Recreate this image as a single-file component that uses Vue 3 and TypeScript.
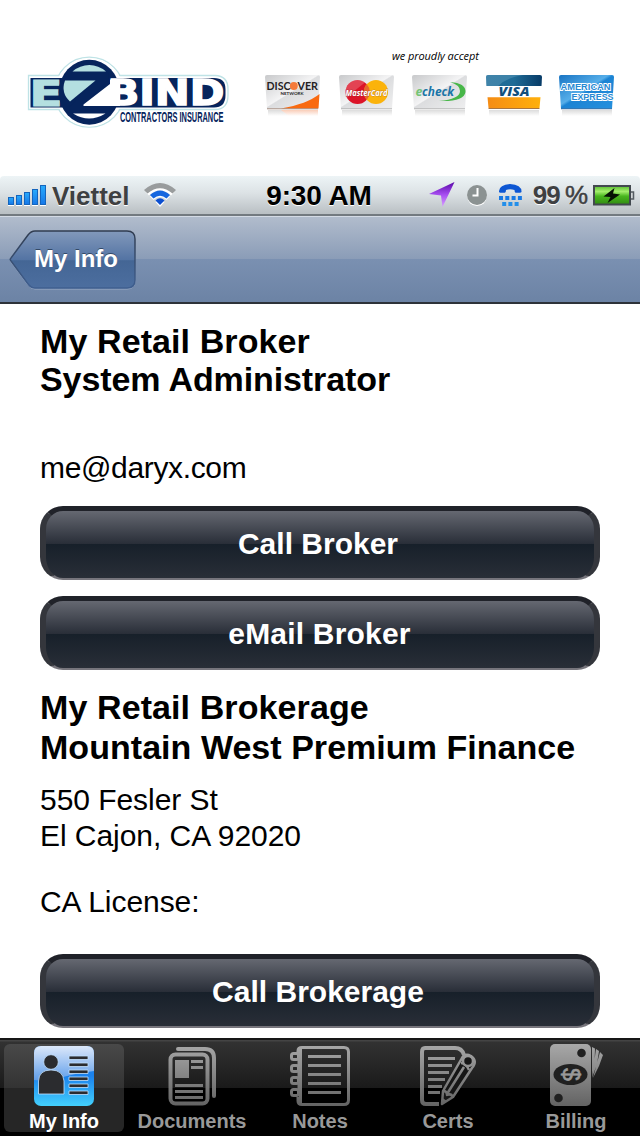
<script setup lang="ts">
import { ref } from "vue";

interface Tab {
  id: string;
  label: string;
}

const tabs: Tab[] = [
  { id: "info", label: "My Info" },
  { id: "documents", label: "Documents" },
  { id: "notes", label: "Notes" },
  { id: "certs", label: "Certs" },
  { id: "billing", label: "Billing" },
];

const active = ref("info");

const signalBars = [8, 10, 13, 16, 20];
const ttyTop = [0, 6.3, 12.6, 18.9];
const ttyBottom = [3.2, 9.4, 15.6];
</script>

<template>
  <div class="screen">
    <header class="brand">
      <svg class="logo" width="208" height="80" viewBox="0 0 208 80">
        <g fill="#fff" stroke="#bfe3e6" stroke-width="1.3">
          <circle cx="65.300" cy="43.200" r="35" />
          <path d="M4.500 26.500H191Q204 27 204 40V46Q204 60.500 191 60.500H4.500Z" />
        </g>
        <circle cx="65.300" cy="43.200" r="34.300" fill="#fff" />
        <path d="M6.500 29H190Q201.500 29 201.500 40V46Q201.500 58.500 190 58.500H6.500Z" fill="#06245c" />
        <text class="logo-word" x="5.500" y="56.500" font-size="35" textLength="33" lengthAdjust="spacingAndGlyphs" fill="#b4dfe0" stroke="#b4dfe0" stroke-width="1.200">E</text>
        <ellipse cx="65.300" cy="43.200" rx="30.500" ry="32.500" fill="#06245c" />
        <text class="logo-word" x="43" y="64" font-size="55" textLength="45" lengthAdjust="spacingAndGlyphs" fill="#06245c">Z</text>
        <path d="M48.500 22.500Q56 16 65.300 16Q74.500 16 82 22.500Z" fill="#b4dfe0" />
        <path d="M49 64.500H81.500Q65 74.500 49 64.500Z" fill="#fff" />
        <path d="M41 31.500H71.500L46 52.500Q36.500 44 41 31.500Z" fill="#b4dfe0" />
        <path d="M86 30.500H96V57H59.500V55.500L86 35Z" fill="#fff" />
        <text class="logo-word" x="83.500" y="56" font-size="35" textLength="117" lengthAdjust="spacingAndGlyphs" fill="#fff" stroke="#fff" stroke-width="1.400">BIND</text>
        <text class="logo-tag" x="0" y="0" font-size="15" textLength="103.500" lengthAdjust="spacingAndGlyphs" transform="translate(96 72.800)">CONTRACTORS INSURANCE</text>
      </svg>

      <div class="payments">
        <span class="accept">we proudly accept</span>
        <div class="cards">
          <svg class="card" viewBox="0 0 56 44">
            <defs>
              <linearGradient id="silver" x1="0" y1="0" x2="1" y2="1">
                <stop offset="0" stop-color="#c8c9cb" />
                <stop offset=".48" stop-color="#f4f4f5" />
                <stop offset=".5" stop-color="#dcdddf" />
                <stop offset="1" stop-color="#efeff0" />
              </linearGradient>
              <linearGradient id="reflect" x1="0" y1="0" x2="0" y2="1">
                <stop offset="0" stop-color="#dcdcdc" />
                <stop offset="1" stop-color="#fff" />
              </linearGradient>
              <linearGradient id="reflectOrange" x1="0" y1="0" x2="0" y2="1">
                <stop offset="0" stop-color="#f9cdb8" />
                <stop offset="1" stop-color="#fff" />
              </linearGradient>
            </defs>
            <path d="M3 35H53V41H3Z" fill="url(#reflect)" />
            <path d="M16 35H53V41H24Z" fill="url(#reflectOrange)" />
            <path d="M0 2Q0 0 2 0H53Q55 0 55 2L53 34H2Z" fill="url(#silver)" />
            <path d="M16 33.500Q42 29 54.500 19L53.500 33.500Z" fill="#f96a10" />
            <path d="M2 33.800H53" stroke="#9b7c6c" stroke-width=".8" />
            <circle cx="28.800" cy="11" r="4" fill="#f47a3a" />
            <text class="lato" x="1.500" y="15.300" font-size="12" textLength="24" lengthAdjust="spacingAndGlyphs" fill="#25211f">DISC</text>
            <text class="lato" x="32.500" y="15.300" font-size="12" textLength="20.500" lengthAdjust="spacingAndGlyphs" fill="#25211f">VER</text>
            <text class="lato" x="15.500" y="20.300" font-size="4.500" textLength="23" fill="#222">NETWORK</text>
          </svg>
          <svg class="card" viewBox="0 0 56 44">
            <path d="M3 35H53V41H3Z" fill="url(#reflect)" />
            <path d="M0 2Q0 0 2 0H53Q55 0 55 2L53 34H2Z" fill="url(#silver)" />
            <path d="M2 33.800H53" stroke="#aaa" stroke-width=".8" />
            <circle cx="18.500" cy="17" r="12" fill="#dc1428" />
            <circle cx="37" cy="17" r="12" fill="#fbb30b" />
            <path d="M27.700 9A12 12 0 0 1 27.700 25A12 12 0 0 1 27.700 9Z" fill="#e8672b" />
            <path d="M7 13.500A12 12 0 0 1 26 7.500L14 17L8 23Q6 18 7 13.500Z" fill="#fff" opacity=".2" />
            <text class="opensans" x="6.500" y="20.500" font-size="9" textLength="42" lengthAdjust="spacingAndGlyphs" fill="#fff" stroke="#7b3630" stroke-width=".4" paint-order="stroke">MasterCard</text>
          </svg>
          <svg class="card" viewBox="0 0 56 44">
            <path d="M3 35H53V41H3Z" fill="url(#reflect)" />
            <path d="M0 2Q0 0 2 0H53Q55 0 55 2L53 34H2Z" fill="url(#silver)" />
            <path d="M2 33.800H53" stroke="#aaa" stroke-width=".8" />
            <path d="M38 7Q54 8 53.500 17Q52 27 27 26Q48 24 48 16Q48 10 38 7Z" fill="#48b749" />
            <text class="opensans" x="3.500" y="20.500" font-size="12.500" fill="#74c476">e</text>
            <text class="opensans" x="10" y="20.500" font-size="12.500" textLength="32" lengthAdjust="spacingAndGlyphs" fill="#1b75a7">check</text>
          </svg>
          <svg class="card" viewBox="0 0 56 44">
            <defs>
              <linearGradient id="visaBlue" x1="0" x2="1">
                <stop offset="0" stop-color="#246d98" />
                <stop offset=".5" stop-color="#1f6b96" />
                <stop offset="1" stop-color="#073b67" />
              </linearGradient>
              <linearGradient id="visaGold" x1="0" x2="1">
                <stop offset="0" stop-color="#f58c14" />
                <stop offset="1" stop-color="#ffb00c" />
              </linearGradient>
            </defs>
            <path d="M3 35H53V41H3Z" fill="url(#reflect)" />
            <path d="M0 2Q0 0 2 0H54Q56 0 56 2L55.500 11H.500Z" fill="url(#visaBlue)" />
            <path d="M12 11Q20 3 37 0H2Q0 0 0 2L.500 11Z" fill="#6aa4c3" opacity=".4" />
            <path d="M1 11H54.500L54 22H1.500Z" fill="#fff" />
            <path d="M1.500 22.300H54.500L53.500 33H2.500Z" fill="url(#visaGold)" />
            <path d="M2.500 33.500H53.500" stroke="#a97540" />
            <text class="opensans visa" x="12.500" y="21.300" font-size="12.500" textLength="31" lengthAdjust="spacingAndGlyphs" fill="#124f7d">VISA</text>
          </svg>
          <svg class="card" viewBox="0 0 56 44">
            <defs>
              <linearGradient id="amex" x1="0" y1="0" x2="1" y2="1">
                <stop offset="0" stop-color="#1874c3" />
                <stop offset=".45" stop-color="#56aee9" />
                <stop offset=".5" stop-color="#1b83d3" />
                <stop offset="1" stop-color="#2591df" />
              </linearGradient>
            </defs>
            <path d="M3 35H53V41H3Z" fill="url(#reflect)" />
            <path d="M0 2Q0 0 2 0H53Q55 0 55 2L53 34H2Z" fill="url(#amex)" />
            <path d="M2 33.800H53" stroke="#436c9a" stroke-width=".8" />
            <text class="amex" x="1.500" y="15.300" font-size="9.500" textLength="50" lengthAdjust="spacingAndGlyphs">AMERICAN</text>
            <text class="amex" x="12.500" y="25.300" font-size="9" textLength="42" lengthAdjust="spacingAndGlyphs">EXPRESS</text>
          </svg>
        </div>
      </div>
    </header>

    <div class="status">
      <div class="status-left">
        <div class="signal">
          <i v-for="h in signalBars" :key="h" :style="{ height: h + 'px' }"></i>
        </div>
        <span class="carrier">Viettel</span>
        <svg class="wifi" width="32" height="26" viewBox="0 0 32 26" fill="none">
          <path d="M1.500 9Q16-4.500 30.500 9L27 12.500Q16 2.500 5 12.500Z" fill="#fff" transform="translate(0 1)" />
          <path d="M0 8Q16-6 32 8L28.500 11.500Q16 1 3.500 11.500Z" fill="#999c9d" />
          <path d="M6 14.500Q16 5.500 26 14.500L22.500 18Q16 12 9.500 18Z" fill="#fff" />
          <path d="M6 13Q16 4 26 13L22.500 16.500Q16 11 9.500 16.500Z" fill="#1767df" />
          <path d="M11.500 20Q16 15.500 20.500 20L16 25Z" fill="#fff" />
          <path d="M11.500 18.500Q16 14 20.500 18.500L16 23Z" fill="#0c4fd0" />
        </svg>
      </div>
      <span class="clock">9:30 AM</span>
      <div class="status-right">
        <svg width="26" height="26" viewBox="0 0 26 26">
          <defs>
            <linearGradient id="arrow" x1="0" y1="0" x2="0" y2="1">
              <stop offset="0" stop-color="#5a08a8" />
              <stop offset=".5" stop-color="#a64df0" />
              <stop offset="1" stop-color="#d9a2ff" />
            </linearGradient>
          </defs>
          <path d="M25.500 0L0 12L12 13.500L13.500 25Z" fill="url(#arrow)" />
        </svg>
        <svg class="alarm" width="20" height="22" viewBox="0 0 20 22">
          <circle cx="10" cy="12.200" r="9.800" fill="#fff" />
          <circle cx="10" cy="11" r="10" fill="#8b9292" />
          <path d="M10.500 4V11.500H5.500" fill="none" stroke="#fff" stroke-width="2" />
        </svg>
        <svg class="tty" width="23" height="24" viewBox="0 0 23 24">
          <path d="M0 8Q-.500 1 11 0Q23 1 22.500 8Q22 9 20 8.700H16.500Q15.500 8 15.500 6Q11 4.500 7 6Q7 8 6 8.700H2Q.500 9 0 8Z" fill="#0d57d3" />
          <rect v-for="x in ttyTop" :key="'t' + x" :x="x" y="12" width="4" height="4" fill="#1879e4" />
          <rect v-for="x in ttyBottom" :key="'b' + x" :x="x" y="18" width="4" height="4" fill="#238fea" />
        </svg>
        <span class="percent">99<em>%</em></span>
        <svg class="battery" width="42" height="22" viewBox="0 0 42 22">
          <defs>
            <linearGradient id="charge" x1="0" y1="0" x2="0" y2="1">
              <stop offset="0" stop-color="#58bc2f" />
              <stop offset=".3" stop-color="#a3ee6c" />
              <stop offset=".55" stop-color="#48b61e" />
              <stop offset="1" stop-color="#318b12" />
            </linearGradient>
          </defs>
          <rect x="1" y="1" width="36" height="18.500" fill="url(#charge)" stroke="#42494f" stroke-width="2" />
          <path d="M38 7H40.500V14H38" fill="#d2d6d8" stroke="#555c62" stroke-width="1.500" />
          <path d="M21.500 3L10.500 11.500L17.500 12L14.500 18L27 9.500L20 8.500Z" fill="#061204" />
        </svg>
      </div>
    </div>

    <nav class="navbar">
      <button class="back">
        <svg class="back-shape" width="128" height="61" viewBox="0 0 128 61">
          <defs>
            <linearGradient id="back" x1="0" y1="0" x2="0" y2="1">
              <stop offset="0" stop-color="#8299bb" />
              <stop offset=".51" stop-color="#5373a3" />
              <stop offset=".52" stop-color="#446695" />
              <stop offset="1" stop-color="#4c6e9f" />
            </linearGradient>
            <linearGradient id="backEdge" x1="0" y1="0" x2="0" y2="1">
              <stop offset="0" stop-color="#303c50" />
              <stop offset="1" stop-color="#3f5f90" />
            </linearGradient>
          </defs>
          <path d="M26 2H118Q126 2 126 10V51Q126 59 118 59H26Q22 59 19 55L2 32Q.500 30.500 2 29L19 6Q22 2 26 2Z" fill="none" stroke="#b9c6da" stroke-opacity=".6" />
          <path d="M26 1H118Q126 1 126 9V50Q126 58 118 58H26Q22 58 19 54L2 31Q.500 29.500 2 28L19 5Q22 1 26 1Z" fill="url(#back)" stroke="url(#backEdge)" stroke-width="1.500" />
        </svg>
        <span class="back-label">My Info</span>
      </button>
    </nav>

    <main class="content">
      <h2>My Retail Broker<br /><span class="role">System Administrator</span></h2>
      <p class="email">me@daryx.com</p>
      <button class="action">Call Broker</button>
      <button class="action email-action">eMail Broker</button>
      <h2 class="brokerage">My Retail Brokerage<br /><span class="company">Mountain West Premium Finance</span></h2>
      <p class="address">550 Fesler St<br />El Cajon, CA 92020</p>
      <p class="license">CA License:</p>
      <button class="action">Call Brokerage</button>
    </main>

    <footer class="tabbar">
      <button
        v-for="t in tabs"
        :key="t.id"
        class="tab"
        :class="{ active: t.id === active }"
        @click="active = t.id"
      >
        <svg v-if="t.id === 'info'" class="tab-icon" viewBox="0 0 60 62">
          <defs>
            <linearGradient id="glossTop" x1="0" y1="0" x2="0" y2="1">
              <stop offset="0" stop-color="#dce8fa" />
              <stop offset="1" stop-color="#609eea" />
            </linearGradient>
            <linearGradient id="glossBottom" x1="0" y1="0" x2="0" y2="1">
              <stop offset="0" stop-color="#1b82ed" />
              <stop offset=".5" stop-color="#1b82ed" />
              <stop offset="1" stop-color="#43d0fc" />
            </linearGradient>
          </defs>
          <rect y="2" width="60" height="60" rx="7" fill="url(#glossBottom)" />
          <path d="M0 36V9Q0 2 7 2H53Q60 2 60 9V27Q43 29 29 33Q14 37 0 36Z" fill="url(#glossTop)" />
          <g fill="#2b2c2f" stroke="#c4e2ff" stroke-width=".8">
            <circle cx="17" cy="18" r="7.300" />
            <path d="M4.500 50V37Q5 26 17 26Q29 26 30 37V50Z" />
            <path d="M35 12H54V15.500H35ZM35 19H54V22.500H35ZM35 26H54V29.500H35ZM35 33H54V36.500H35ZM35 40H54V43.500H35ZM35 47H54V50.500H35Z" />
          </g>
        </svg>
        <svg v-else-if="t.id === 'documents'" class="tab-icon" viewBox="0 0 60 62">
          <defs>
            <linearGradient id="grey" gradientUnits="userSpaceOnUse" x1="0" y1="0" x2="0" y2="62">
              <stop offset="0" stop-color="#a8a8a8" />
              <stop offset="1" stop-color="#636363" />
            </linearGradient>
          </defs>
          <g fill="none" stroke="url(#grey)" stroke-width="4" stroke-linecap="round">
            <rect x="8.500" y="10.500" width="37" height="49" rx="5" />
            <path d="M16 5H43Q52 5 52 14V52" />
          </g>
          <g fill="url(#grey)">
            <path d="M13 16H27V34H13Z" />
            <path d="M29 16H41V19H29ZM29 22H41V25H29ZM13 40H41V43H13ZM13 46H41V49H13ZM13 52H41V55H13Z" />
          </g>
        </svg>
        <svg v-else-if="t.id === 'notes'" class="tab-icon" viewBox="0 0 60 62">
          <path d="M8 9V7Q8 3.500 12 3.500H54Q58.500 3.500 58.500 8V56Q58.500 60.500 54 60.500H12Q8 60.500 8 57V53M9 16V21M9 28V33M9 40V45" fill="none" stroke="url(#grey)" stroke-width="3" />
          <path d="M10.500 3V61" stroke="url(#grey)" stroke-width="3" />
          <g fill="none" stroke="url(#grey)" stroke-width="3">
            <rect x="1.500" y="9.500" width="7" height="6" rx="2" />
            <rect x="1.500" y="21.500" width="7" height="6" rx="2" />
            <rect x="1.500" y="33.500" width="7" height="6" rx="2" />
            <rect x="1.500" y="45.500" width="7" height="6" rx="2" />
          </g>
          <path d="M18 11H51V14H18ZM18 20H51V23H18ZM18 29H51V32H18ZM18 38H51V41H18ZM18 47H51V50H18Z" fill="url(#grey)" />
        </svg>
        <svg v-else-if="t.id === 'certs'" class="tab-icon" viewBox="0 0 60 62">
          <path d="M46 11Q44 4 37 4H7Q4 4 4 8V56Q4 60 8 60H21" fill="none" stroke="url(#grey)" stroke-width="4" />
          <path d="M10 13H37V16H10ZM10 20H34V23H10ZM10 27H31V30H10ZM10 34H27V37H10ZM10 41H24V44H10ZM10 47H22V50H10Z" fill="url(#grey)" />
          <g fill="#161616" stroke="url(#grey)" stroke-width="2.500" stroke-linejoin="round">
            <path d="M44 14L25 47L24 60L35 53L54 24Q60 17 53 12Q47 9 44 14Z" />
            <path d="M43 19Q48 19 51 26M25 47Q29 47 29 51Q33 49 35 53M46 23L29 50" fill="none" />
            <circle cx="50" cy="17" r="5" />
          </g>
          <path d="M24 60L24.500 54L29 57Z" fill="url(#grey)" />
        </svg>
        <svg v-else class="tab-icon" viewBox="0 0 60 62">
          <path d="M46 3L49 4.500L48.500 20L46 31ZM50 5L53 7L51 20L46 34ZM54 8L57 11L53 22L47 34Z" fill="url(#grey)" />
          <rect x="4" y="0" width="41" height="62" rx="5" fill="url(#grey)" />
          <g fill="#202020">
            <circle cx="35.500" cy="9" r="4.300" />
            <circle cx="12.500" cy="54" r="4.300" />
            <ellipse cx="24.500" cy="30.500" rx="17" ry="10.500" />
          </g>
          <text x="0" y="0" text-anchor="middle" class="dollar" transform="translate(16.500 30.500) rotate(90)">$</text>
        </svg>
        <span class="tab-label">{{ t.label }}</span>
      </button>
    </footer>
  </div>
</template>

<style>
body {
  margin: 0;
  background: #fff;
}
</style>

<style scoped>
.screen {
  width: 640px;
  height: 1136px;
  display: flex;
  flex-direction: column;
  overflow: hidden;
  background: #fff;
  color: #000;
  font-family: "Liberation Sans", Arial, sans-serif;
}

button {
  border: none;
  padding: 0;
  background: none;
  font-family: inherit;
  cursor: pointer;
}

.brand {
  height: 176px;
  flex: none;
  display: flex;
}
.logo {
  margin: 49px 0 0 24px;
  overflow: visible;
}
.logo-word {
  font-family: "DejaVu Sans", sans-serif;
  font-weight: 700;
}
.logo-tag {
  font-family: "Liberation Sans", sans-serif;
  font-weight: 700;
  fill: #06245c;
}

.payments {
  flex: 1;
  padding: 47px 0 0 33px;
}
.accept {
  display: block;
  height: 28px;
  margin-left: 127px;
  font: italic 11px/17px "Open Sans", sans-serif;
  letter-spacing: -0.08px;
}
.cards {
  display: flex;
  gap: 17.5px;
}
.card {
  width: 56px;
  height: 44px;
  overflow: visible;
}
.lato {
  font-family: Lato, sans-serif;
  font-weight: 700;
}
.opensans {
  font-family: "Open Sans", sans-serif;
  font-weight: 700;
  font-style: italic;
}
.visa {
  font-weight: 800;
}
.amex {
  font-family: "Liberation Sans", sans-serif;
  font-weight: 700;
  fill: #2789d3;
  stroke: #fff;
  stroke-width: 2px;
  paint-order: stroke;
}

.status {
  box-sizing: border-box;
  height: 40px;
  flex: none;
  display: grid;
  grid-template-columns: 1fr auto 1fr;
  align-items: center;
  background: linear-gradient(#edf4f6, #dce2e5 45%, #b9bfc3);
  border-bottom: 2px solid #737a80;
  border-radius: 4px 4px 0 0;
}
.status-left {
  display: flex;
  align-items: center;
  padding-left: 8px;
}
.signal {
  display: flex;
  align-items: flex-end;
  gap: 2px;
  height: 20px;
}
.signal i {
  box-sizing: border-box;
  width: 6px;
  background: linear-gradient(#27a9fb, #1779e9);
  border: 1px solid #1465bd;
  box-shadow: 0 1px #fff;
}
.carrier {
  margin-left: 6px;
  padding-top: 2px;
  font-size: 26px;
  font-weight: 700;
  line-height: 30px;
  color: #3e4042;
  text-shadow: 0 1px #fff;
}
.wifi {
  margin-left: 14px;
}
.clock {
  padding: 2px 2px 0 0;
  font-size: 28px;
  font-weight: 700;
  letter-spacing: -0.1px;
  line-height: 32px;
  text-shadow: 0 1px #fff;
}
.status-right {
  display: flex;
  align-items: center;
  justify-content: flex-end;
  padding-right: 5px;
}
.alarm {
  margin-left: 12px;
}
.tty {
  margin: 2px 0 0 12px;
}
.percent {
  margin: 0 7px 0 11px;
  font-size: 26px;
  font-weight: 700;
  letter-spacing: -0.8px;
  color: #3e4042;
  text-shadow: 0 1px #fff;
}
.percent em {
  display: inline-block;
  width: 21px;
  margin-left: 5px;
  font-style: normal;
  font-weight: 400;
  -webkit-text-stroke: 0.5px #3e4042;
}
.battery {
  margin-top: 2px;
}

.navbar {
  box-sizing: border-box;
  height: 88px;
  flex: none;
  padding: 13px 0 0 9px;
  background: linear-gradient(#b1bccc, #8a9cb7 50%, #7a90b1 50%, #6c83a5);
  border-top: 1px solid #d4dbe5;
  border-bottom: 2px solid #2d3239;
}
.back {
  display: grid;
  width: 128px;
  height: 61px;
}
.back-shape,
.back-label {
  grid-area: 1 / 1;
}
.back-label {
  padding-left: 25px;
  color: #fff;
  font-size: 24px;
  font-weight: 700;
  line-height: 58px;
  text-align: left;
  text-shadow: 0 -1px #344966;
}

.content {
  flex: 1;
  min-height: 0;
  display: flex;
  flex-direction: column;
  padding: 18px 40px 0;
}
h2 {
  margin: 0;
  font-size: 34px;
  line-height: 38px;
  letter-spacing: 0.1px;
}
.role {
  letter-spacing: -0.1px;
}
p {
  margin: 0;
  font-size: 30px;
  line-height: 36px;
  letter-spacing: -0.05px;
}
.email {
  margin: 52px 0 20px;
  letter-spacing: -0.35px;
}
.action {
  box-sizing: border-box;
  height: 74px;
  flex: none;
  margin-bottom: 16px;
  padding: 0 4px 2px 0;
  color: #fff;
  font-size: 30px;
  font-weight: 700;
  line-height: 64px;
  border: solid;
  border-width: 5px 6px 2px;
  border-color: #202229 #34363c #77757c;
  border-radius: 23px;
  background: linear-gradient(#656871, #292e38 49%, #17202a 50%, #292e37);
}
.email-action {
  padding-right: 1px;
  letter-spacing: 0.2px;
}
.action:last-child {
  margin-bottom: 0;
}
.brokerage {
  margin-top: 1px;
  line-height: 40px;
}
.company {
  white-space: nowrap;
  letter-spacing: 0.04px;
}
.address {
  margin-top: 15px;
}
.license {
  margin: 30px 0 34px;
}

.tabbar {
  box-sizing: border-box;
  height: 98px;
  flex: none;
  display: flex;
  border-top: 2px solid #171717;
  background: linear-gradient(#444 0 1px, #323232 2px, #1a1a1a 48px, #000 48px);
}
.tab {
  box-sizing: border-box;
  width: 120px;
  height: 88px;
  margin: 4px;
  display: flex;
  flex-direction: column;
  align-items: center;
  border-radius: 6px;
  color: #999;
}
.tab.active {
  color: #fff;
  background: linear-gradient(#494949, #333 44px, #262626 44px);
}
.tab-icon {
  width: 60px;
  height: 62px;
  flex: none;
}
.tab-label {
  margin-top: 4px;
  font-size: 20px;
  font-weight: 700;
  line-height: 22px;
}
.dollar {
  font-size: 23px;
  font-weight: 400;
  fill: #999;
  stroke: #999;
  stroke-width: 0.6px;
}
</style>
